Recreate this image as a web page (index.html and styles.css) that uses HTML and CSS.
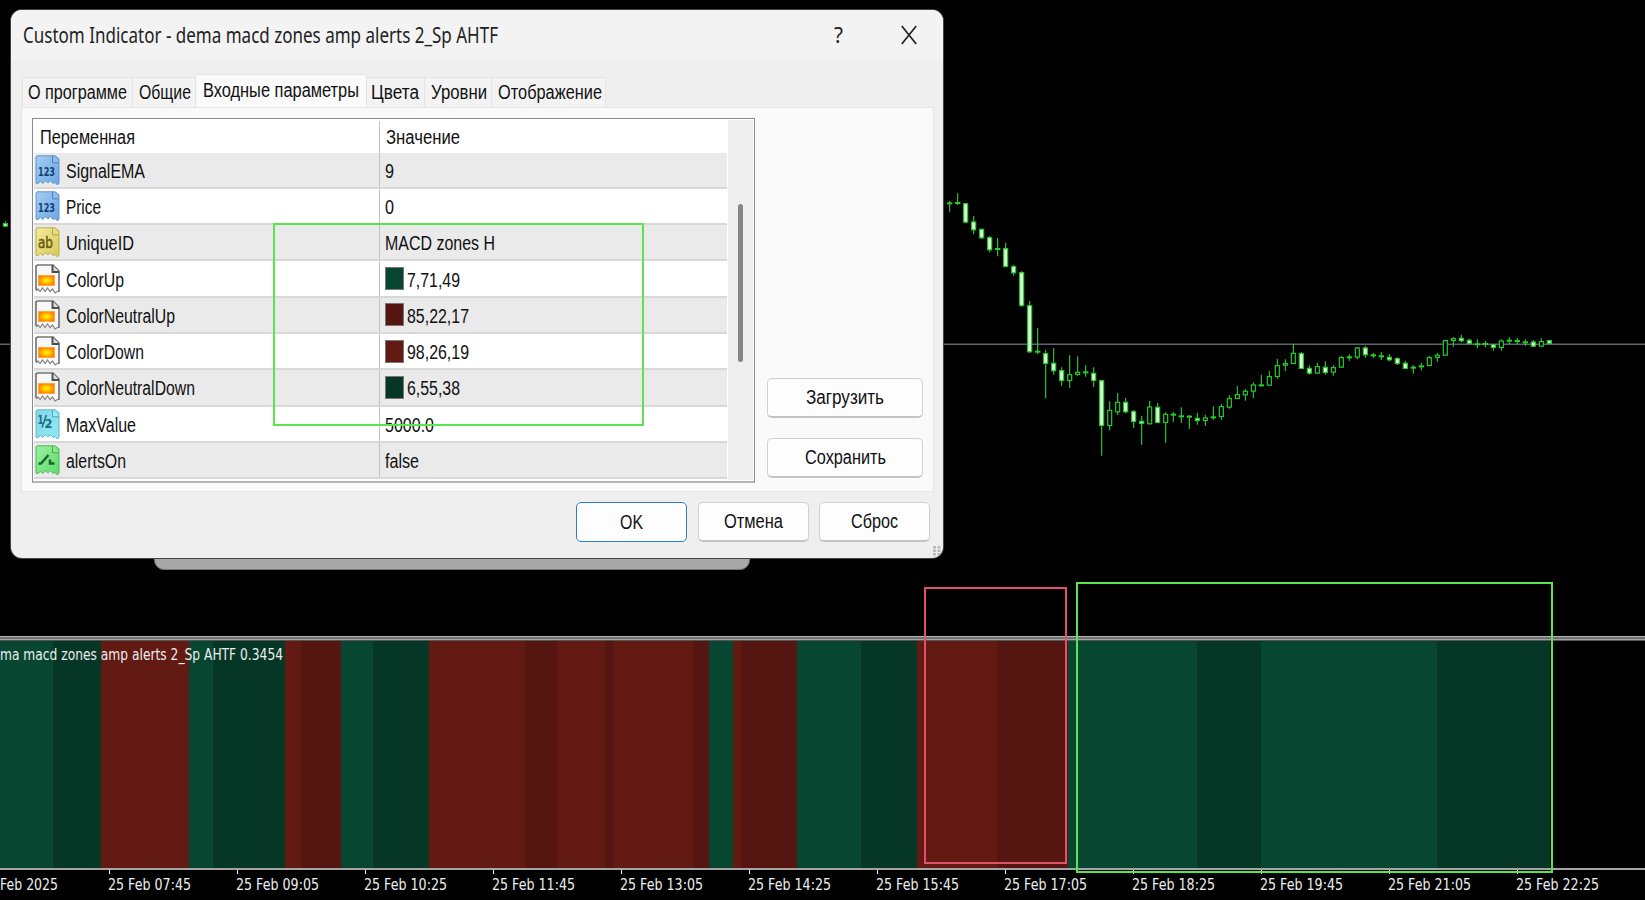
FILE: index.html
```html
<!DOCTYPE html>
<html lang="ru">
<head>
<meta charset="utf-8">
<title>Custom Indicator</title>
<link rel="stylesheet" href="styles.css">
</head>
<body>
<svg class="defs" width="0" height="0">
  <defs>
    <linearGradient id="gBlue" x1="0" y1="0" x2="1" y2="1"><stop offset="0" stop-color="#a5cdf5"/><stop offset="1" stop-color="#6aa5e0"/></linearGradient>
    <linearGradient id="gYel" x1="0" y1="0" x2="1" y2="1"><stop offset="0" stop-color="#f3eb9c"/><stop offset="1" stop-color="#d8ca55"/></linearGradient>
    <linearGradient id="gCyan" x1="0" y1="0" x2="1" y2="1"><stop offset="0" stop-color="#84d6e8"/><stop offset="1" stop-color="#8eeaf3"/></linearGradient>
    <linearGradient id="gGreen" x1="0" y1="0" x2="1" y2="1"><stop offset="0" stop-color="#9cf0a0"/><stop offset="1" stop-color="#5fd96c"/></linearGradient>
    <radialGradient id="gFire"><stop offset="0" stop-color="#fff200"/><stop offset=".35" stop-color="#ffd800"/><stop offset="1" stop-color="#ff8000"/></radialGradient>
    <path id="sheet" d="M2 .8h18l4 3V28l-1.500 2-2.500-2.500-2 1-2.500-3-2.500 2.500-2.500-2.500-2.500 3-2.500-2L2 29l-1-1V2z"/>
    <path id="fold" d="M17.500 .8v7h6.500"/>
    <symbol id="i-int" viewBox="0 0 25 31"><use href="#sheet" fill="url(#gBlue)" stroke="#5e94cc"/><use href="#fold" fill="#8dbcec" stroke="#4d83bd"/><text class="glyph g-int" x="3" y="20.500" textLength="17" lengthAdjust="spacingAndGlyphs">123</text></symbol>
    <symbol id="i-str" viewBox="0 0 25 31"><use href="#sheet" fill="url(#gYel)" stroke="#bcae4c"/><use href="#fold" fill="#e9de83" stroke="#b0a242"/><text class="glyph g-str" x="3" y="20.500" textLength="15" lengthAdjust="spacingAndGlyphs">ab</text></symbol>
    <symbol id="i-col" viewBox="0 0 25 31"><path d="M1 26V2L2.500 1H18l6 6V28" fill="#f8f8f8" stroke="#777" stroke-width="1.700"/><path d="M1 27l2-2 2 2.500 2.500-3.500 2.500 3.500 2.500-3.500 2.500 3.500 2.500-2.500 2.500 4 3.500-2" fill="none" stroke="#808080" stroke-width="1.200"/><path d="M17.500 1v7H24" fill="#ddd" stroke="#4c4c4c" stroke-width="1.900"/><rect x="3.500" y="11.500" width="16" height="10" fill="url(#gFire)" stroke="#ffa63c"/></symbol>
    <symbol id="i-dbl" viewBox="0 0 25 31"><use href="#sheet" fill="url(#gCyan)" stroke="#62b4c6"/><use href="#fold" fill="#a0e8f2" stroke="#4ba5b8"/><text class="glyph g-dbl" x="2.500" y="15" textLength="6" lengthAdjust="spacingAndGlyphs">1</text><path d="M7 18.500L11.500 6" stroke="#1a6d85" stroke-width="1.500"/><text class="glyph g-dbl" x="9.500" y="19" textLength="8" lengthAdjust="spacingAndGlyphs">2</text></symbol>
    <symbol id="i-bool" viewBox="0 0 25 31"><use href="#sheet" fill="url(#gGreen)" stroke="#4fb95c"/><use href="#fold" fill="#8be993" stroke="#3fae4e"/><path d="M3.500 18.500h2.500L13.500 10M15 14.500v4h4.500" fill="none" stroke="#14682a" stroke-width="2.500"/></symbol>
  </defs>
</svg>

<main class="terminal">
  <svg class="price" id="price" viewBox="0 0 1645 636"></svg>
  <div class="splitter"></div>
  <section class="zones"><div class="bands" id="bands"></div><span class="fit caption" data-w="283">ma macd zones amp alerts 2_Sp AHTF 0.3454</span></section>
  <footer class="axis" id="axis"></footer>
</main>

<div class="mark mark-red"></div>
<div class="mark mark-green"></div>
<div class="behind"></div>

<div class="dialog">
  <header class="titlebar">
    <span class="fit title" data-w="475">Custom Indicator - dema macd zones amp alerts 2_Sp AHTF</span>
    <span class="fit help" data-w="9">?</span>
    <svg class="close" width="16" height="20" viewBox="0 0 16 20"><path d="M.8 1l14.400 18M15.200 1L.8 19" stroke="#222" stroke-width="1.700" fill="none"/></svg>
  </header>
  <nav class="tabs">
    <div class="tab t1"><span class="fit" data-w="99">О программе</span></div>
    <div class="tab t2"><span class="fit" data-w="52">Общие</span></div>
    <div class="tab active t3"><span class="fit" data-w="156">Входные параметры</span></div>
    <div class="tab t4"><span class="fit" data-w="48">Цвета</span></div>
    <div class="tab t5"><span class="fit" data-w="56">Уровни</span></div>
    <div class="tab t6"><span class="fit" data-w="104">Отображение</span></div>
  </nav>
  <section class="page">
    <div class="table">
      <div class="rows">
        <div class="row head"><div class="name"><span class="fit" data-w="95">Переменная</span></div><div class="value"><span class="fit" data-w="74">Значение</span></div></div>
        <div class="row alt"><div class="name"><svg class="ico"><use href="#i-int"/></svg><span class="fit" data-w="79">SignalEMA</span></div><div class="value"><span class="fit" data-w="9">9</span></div></div>
        <div class="row"><div class="name"><svg class="ico"><use href="#i-int"/></svg><span class="fit" data-w="35">Price</span></div><div class="value"><span class="fit" data-w="9">0</span></div></div>
        <div class="row alt"><div class="name"><svg class="ico"><use href="#i-str"/></svg><span class="fit" data-w="68">UniqueID</span></div><div class="value"><span class="fit" data-w="110">MACD zones H</span></div></div>
        <div class="row"><div class="name"><svg class="ico"><use href="#i-col"/></svg><span class="fit" data-w="58">ColorUp</span></div><div class="value"><i class="chip up"></i><span class="fit" data-w="53">7,71,49</span></div></div>
        <div class="row alt"><div class="name"><svg class="ico"><use href="#i-col"/></svg><span class="fit" data-w="109">ColorNeutralUp</span></div><div class="value"><i class="chip nup"></i><span class="fit" data-w="62">85,22,17</span></div></div>
        <div class="row"><div class="name"><svg class="ico"><use href="#i-col"/></svg><span class="fit" data-w="78">ColorDown</span></div><div class="value"><i class="chip down"></i><span class="fit" data-w="62">98,26,19</span></div></div>
        <div class="row alt"><div class="name"><svg class="ico"><use href="#i-col"/></svg><span class="fit" data-w="129">ColorNeutralDown</span></div><div class="value"><i class="chip ndown"></i><span class="fit" data-w="53">6,55,38</span></div></div>
        <div class="row"><div class="name"><svg class="ico"><use href="#i-dbl"/></svg><span class="fit" data-w="70">MaxValue</span></div><div class="value"><span class="fit" data-w="49">5000.0</span></div></div>
        <div class="row alt"><div class="name"><svg class="ico"><use href="#i-bool"/></svg><span class="fit" data-w="60">alertsOn</span></div><div class="value"><span class="fit" data-w="34">false</span></div></div>
      </div>
      <div class="scroll"><div class="thumb"></div></div>
    </div>
    <div class="side">
      <button class="btn"><span class="fit" data-w="78">Загрузить</span></button>
      <button class="btn"><span class="fit" data-w="81">Сохранить</span></button>
    </div>
  </section>
  <div class="actions">
    <button class="btn ok"><span class="fit" data-w="23">OK</span></button>
    <button class="btn"><span class="fit" data-w="59">Отмена</span></button>
    <button class="btn reset"><span class="fit" data-w="47">Сброс</span></button>
  </div>
  <svg class="grip" width="8" height="10" viewBox="0 0 8 10"><path d="M0 0h3v2.500H0zM4.500 0h3v2.500h-3zM0 3.500h3V6H0zM4.500 3.500h3V6h-3zM0 7h3v2.500H0zM4.500 7h3v2.500h-3z" fill="#bbb"/></svg>
</div>
<div class="mark mark-params"></div>
<script src="script.js"></script>
</body>
</html>
```

FILE: styles.css
```css
* { box-sizing: border-box; }
body { margin: 0; width: 1645px; height: 900px; overflow: hidden; background: #000; font-family: "Liberation Sans", Arial, sans-serif; font-size: 20px; color: #111; }
.defs { position: absolute; }
.fit { display: inline-block; flex: none; white-space: nowrap; transform-origin: 0 50%; line-height: 24px; }

/* chart */
.terminal { display: flex; flex-direction: column; height: 900px; }
.price { display: block; flex: none; width: 1645px; height: 636px; }
.splitter { flex: none; height: 5px; background: linear-gradient(#b5b5b5 0 1px, #707070 1px 3px, #a2a2a2 3px 4px, #555 4px); }
.zones { display: grid; flex: none; height: 227px; font-family: "DejaVu Sans", sans-serif; }
.zones > * { grid-area: 1 / 1; }
.bands { display: flex; }
.caption { justify-self: start; color: #eee; font-size: 15.5px; padding-top: 2px; }
.z-up { background: #074731; }
.z-nup { background: #551611; }
.z-down { background: #621a13; }
.z-ndown { background: #063726; }
.axis { display: flex; flex: none; height: 32px; border-top: 2px solid #a5a5a5; }
.stamp { flex: none; width: 128px; color: #eee; font-family: "DejaVu Sans", sans-serif; font-size: 15.5px; }
.stamp::before { content: ""; display: block; width: 1px; height: 4px; margin: 0 0 -1px 1px; background: #fff; }
.stamp:first-child { width: 108px; }
.stamp:first-child::before { visibility: hidden; }
.candle { stroke: #27c92b; stroke-width: 1.2; fill: #000; }
.candle.full { fill: #dcffd8; }
.wick { stroke: #2fcf33; stroke-width: 1.1; }
.doji { stroke: #25cf28; stroke-width: 2; }
.level { stroke: #5d6472; stroke-width: 1.5; }

/* annotations */
.mark { position: absolute; border: 2px solid #5ae550; }
.mark-red { left: 924px; top: 587px; width: 143px; height: 277px; border-color: #e2506a; }
.mark-green { left: 1076px; top: 582px; width: 477px; height: 291px; }
.mark-params { left: 273px; top: 223px; width: 371px; height: 203px; }

/* dialog */
.behind { position: absolute; left: 154px; top: 550px; width: 596px; height: 20px; background: #a8a8a8; border: 1px solid #777; border-radius: 0 0 10px 10px; }
.dialog { position: absolute; left: 11px; top: 9.5px; width: 932px; height: 548px; background: #efefef; border-radius: 11px; box-shadow: 0 0 0 1px #444; overflow: hidden; display: flex; flex-direction: column; }
.titlebar { display: flex; align-items: center; height: 50.5px; flex: none; background: #f3f3f3; padding-left: 12px; }
.title, .help { font-family: "Noto Sans", "Open Sans", sans-serif; font-size: 21.5px; color: #222; }
.help { margin-left: 336px; }
.close { margin-left: 58px; }
.tabs { display: flex; align-items: flex-end; height: 47px; flex: none; padding-left: 11px; }
.tab { height: 30px; background: #f3f3f3; border: 1px solid #e4e4e4; border-width: 1px 1px 0 0; padding: 2px 0 0 5px; }
.tab.active { height: 33px; background: #fafafa; padding: 3px 0 0 7px; }
.t1 { width: 111px; border-left-width: 1px; }
.t2 { width: 63px; padding-left: 6px; }
.t3 { width: 171px; }
.t4 { width: 58px; padding-left: 4px; }
.t5 { width: 67px; padding-left: 6px; }
.t6 { width: 114px; padding-left: 6px; }
.page { display: flex; flex: none; width: 913px; height: 385px; margin-left: 10px; background: #fafafa; border: 1px solid #e6e6e6; padding: 10px 0 0 10px; }
.table { display: flex; width: 723px; height: 365px; border: 1px solid #878b90; border-bottom: 2px solid #b5b5b5; background: #fff; padding-left: 1px; }
.rows { width: 693px; height: 361px; overflow: hidden; }
.row { display: flex; height: 36.3px; border-bottom: 2px solid #d8d8d8; }
.row.head { height: 33.500px; border-bottom: 0; padding-top: 2px; }
.row.alt { background: #eaeaea; }
.name { display: flex; align-items: center; width: 346px; border-right: 1px solid #c4c4c4; }
.head .name { padding-left: 6px; }
.value { display: flex; align-items: center; padding-left: 5px; }
.head .value { padding-left: 6px; }
.row:not(.head) .fit { padding-top: 2px; }
.ico { flex: none; width: 25px; height: 31px; margin: 1px 6px 0 1px; }
.glyph { font-family: "DejaVu Sans", sans-serif; font-weight: bold; }
.g-int { font-size: 12.5px; fill: #123f73; }
.g-str { font-size: 15.5px; fill: #655a13; font-weight: normal; stroke: #655a13; stroke-width: .5px; }
.g-dbl { font-size: 11.5px; fill: #1a6d85; }
.chip { width: 19px; height: 23px; margin-right: 3px; border: 1px solid #777; }
.up { background: #074731; }
.nup { background: #551611; }
.down { background: #621a13; }
.ndown { background: #063726; }
.scroll { flex: 1; margin: 1px 1px 1px 1px; background: #efefef; padding: 84px 0 0 10px; }
.thumb { width: 5px; height: 158px; border-radius: 3px; background: #868686; }
.side { display: flex; flex-direction: column; gap: 20px; padding: 260px 0 0 12px; }
.btn { display: flex; align-items: center; justify-content: center; width: 156px; height: 40px; padding: 0 0 1px; background: #fdfdfd; border: 1px solid #d0d0d0; border-bottom: 2px solid #c4c4c4; border-radius: 5px; font: inherit; color: inherit; }
.actions { display: flex; gap: 11px; padding: 10px 0 0 565px; }
.actions .btn { width: 111px; }
.actions .reset { margin-left: -1px; }
.actions .ok { border: 1.500px solid #2f7ec0; }
.grip { position: absolute; right: 2px; bottom: 2px; }
```

FILE: script.js
```js
// Candles: [centre x, high, low, body top, body bottom, kind]; F filled, H hollow, D flat.
// Each group is stored at three units per pixel relative to its own origin.
const groups = [
  { x: 930, y: 180, c: [
    [59,62,95,70,0,'D'],[83,40,75,69,0,'D'],[107,70,130,70,127,'F'],[131,108,163,125,150,'F'],[155,146,178,147,174,'F'],
    [179,168,217,172,210,'F'],[203,174,229,207,0,'D'],[227,188,262,205,260,'F'],[251,254,287,259,279,'F'],[275,274,380,277,377,'F'],
    [299,363,518,376,516,'F'],[323,444,522,515,0,'D'],[347,509,655,520,551,'F'],[371,504,584,549,573,'F'],[395,562,617,571,602,'F'],
    [419,526,624,583,602,'H'],[443,529,587,576,584,'H'],[467,556,590,577,0,'D'],[491,562,621,579,602,'F'],[515,600,827,601,737,'F'],
    [539,664,751,690,737,'H'],[563,639,704,666,696,'H'],[587,654,700,666,696,'F'],[611,690,744,694,725,'F'],[635,708,794,723,731,'F'],
    [659,663,733,680,732,'H'],[683,668,729,681,728,'F'],[707,697,788,702,728,'H']] },
  { x: 1160, y: 320, c: [
    [40,276,305,284,0,'D'],[64,262,309,289,0,'D'],[88,285,327,290,0,'D'],[112,278,314,294,302,'F'],[136,284,318,293,302,'H'],
    [160,259,299,292,0,'D'],[184,252,299,259,290,'H'],[208,226,266,235,262,'H'],[232,198,237,223,236,'H'],[256,207,242,213,225,'H'],
    [280,187,234,194,214,'H'],[304,164,200,196,0,'D'],[328,153,197,169,196,'H'],[352,117,176,136,170,'H'],[376,118,153,130,136,'H'],
    [400,72,131,99,131,'H'],[424,96,147,100,146,'F'],[448,136,164,144,160,'F'],[472,128,161,139,160,'H'],[496,124,164,141,158,'F'],
    [520,136,167,142,157,'H'],[544,107,143,112,142,'H'],[568,103,122,112,0,'D'],[592,81,118,83,112,'H'],[616,78,113,83,105,'F'],
    [640,99,114,106,0,'D']] },
  { x: 1360, y: 310, c: [
    [64,125,150,139,0,'D'],[88,132,154,141,150,'F'],[112,142,165,145,161,'F'],[136,152,177,159,176,'F'],
    [160,166,191,173,0,'D'],[184,158,181,169,0,'D'],[208,137,168,142,167,'H'],[232,129,155,135,143,'H'],[256,89,136,91,136,'H'],
    [280,82,110,85,92,'H'],[304,74,97,84,93,'F'],[328,86,102,90,101,'F'],[352,88,115,103,0,'D'],[376,93,112,102,0,'D'],
    [400,102,122,103,113,'F'],[424,88,122,92,113,'H'],[448,82,103,92,0,'D'],[472,83,102,93,0,'D'],[496,88,108,97,0,'D'],
    [520,90,110,95,109,'F'],[544,85,110,94,109,'H'],[568,89,102,91,101,'F']] },
  { x: 0, y: 210, c: [[16,34,51,40,49,'F']] }
];

let svg = '<path class="level" d="M0 344.200H1645"/>';
for (const g of groups) {
  for (const [cx, hi, lo, top, bot, kind] of g.c) {
    const x = g.x + cx / 3;
    const y = v => g.y + v / 3;
    svg += `<path class="wick" d="M${x} ${y(hi)}V${y(lo)}"/>`;
    if (kind === 'D') svg += `<path class="doji" d="M${x - 2.700} ${y(top)}h5.400"/>`;
    else svg += `<rect class="candle ${kind === 'F' ? 'full' : ''}" x="${x - 2}" y="${y(top) + 0.300}" width="4" height="${Math.max(1.500, (bot - top) / 3 - 0.500)}"/>`;
  }
}
document.getElementById('price').innerHTML = svg;

const bands = [[53,'up'],[101,'ndown'],[189,'down'],[213,'up'],[285,'ndown'],[301,'down'],[341,'nup'],[373,'up'],[429,'ndown'],
  [525,'down'],[557,'nup'],[605,'down'],[613,'nup'],[693,'down'],[709,'nup'],[733,'up'],[741,'down'],[797,'nup'],[861,'up'],
  [917,'ndown'],[997,'down'],[1068,'nup'],[1197,'up'],[1261,'ndown'],[1437,'up'],[1550,'ndown']];
let from = 0;
document.getElementById('bands').innerHTML = bands.map(([to, k]) => {
  const html = `<div class="z-${k}" style="width:${to - from}px"></div>`;
  from = to;
  return html;
}).join('');

const times = ['07:45','09:05','10:25','11:45','13:05','14:25','15:45','17:05','18:25','19:45','21:05','22:25'];
document.getElementById('axis').innerHTML =
  '<div class="stamp"><span class="fit" data-w="58">Feb 2025</span></div>' +
  times.map(t => `<div class="stamp"><span class="fit" data-w="83">25 Feb ${t}</span></div>`).join('');

// Condense each label to its design width.
for (const el of document.querySelectorAll('.fit')) {
  const w = Number(el.dataset.w);
  const n = el.getBoundingClientRect().width;
  el.style.transform = `scaleX(${w / n})`;
  el.style.marginRight = `${w - n}px`;
}
```
